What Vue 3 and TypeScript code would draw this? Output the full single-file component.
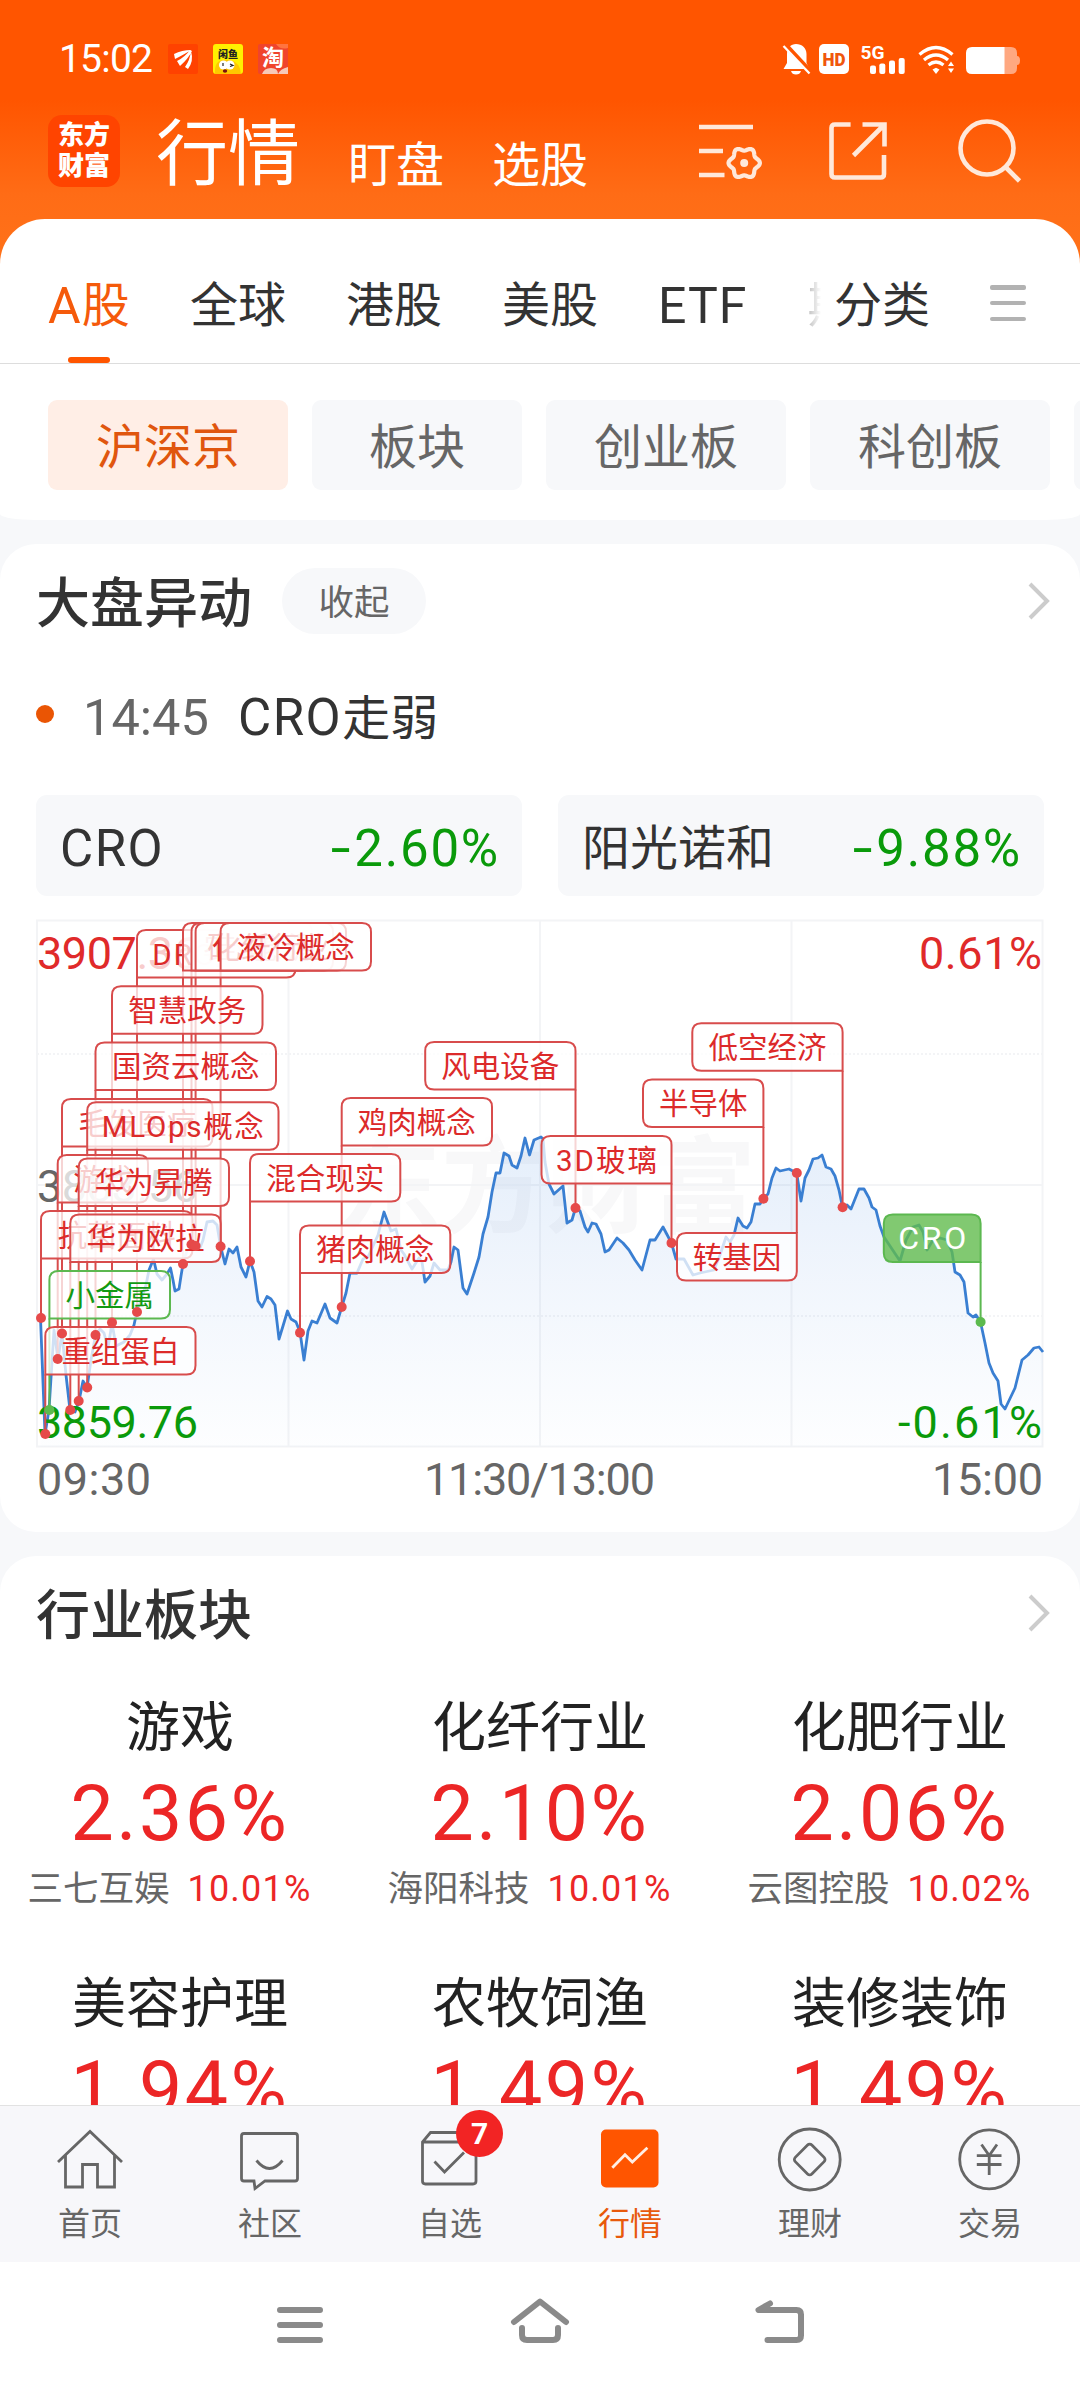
<script setup lang="ts">
interface Flag {
  label: string
  x1: number
  x2: number
  y: number
  side: 'left' | 'right'
  dot: number
  tone: 'red' | 'green' | 'solid'
  below?: boolean
  len?: number
}

const menus: string[] = ['盯盘', '选股']
const tabs: string[] = ['全球', '港股', '美股']
const chips: { label: string; wide: boolean }[] = [
  { label: '沪深京', wide: true },
  { label: '板块', wide: false },
  { label: '创业板', wide: true },
  { label: '科创板', wide: true },
  { label: '', wide: true },
]
const stocks = [
  { name: 'CRO', value: '2.60%' },
  { name: '阳光诺和', value: '9.88%' },
]
const sectors = [
  { name: '游戏', pct: '2.36%', stock: '三七互娱', change: '10.01%' },
  { name: '化纤行业', pct: '2.10%', stock: '海阳科技', change: '10.01%' },
  { name: '化肥行业', pct: '2.06%', stock: '云图控股', change: '10.02%' },
  { name: '美容护理', pct: '1.94%', stock: '', change: '' },
  { name: '农牧饲渔', pct: '1.49%', stock: '', change: '' },
  { name: '装修装饰', pct: '1.49%', stock: '', change: '' },
]

const flags: Flag[] = [
  { label: '抗菌面料', x1: 41, x2: 192.5, y: 1211, side: 'left', dot: 1318, tone: 'red' },
  { label: '重组蛋白', x1: 45.3, x2: 195.5, y: 1327, side: 'left', dot: 1434, tone: 'red' },
  { label: '小金属', x1: 49.4, x2: 170, y: 1271, side: 'left', dot: 1410, tone: 'green' },
  { label: '游戏', x1: 57.7, x2: 148, y: 1155, side: 'left', dot: 1359, tone: 'red' },
  { label: '毛发医疗', x1: 62, x2: 212.5, y: 1099, side: 'left', dot: 1333.5, tone: 'red' },
  { label: '华为欧拉', x1: 70.3, x2: 220.7, y: 1214.5, side: 'left', dot: 1410, tone: 'red' },
  { label: '华为昇腾', x1: 78.7, x2: 229, y: 1158.5, side: 'left', dot: 1401, tone: 'red' },
  { label: 'MLOps概念', x1: 87.2, x2: 278.5, y: 1102.3, side: 'left', dot: 1387.5, tone: 'red', len: 162 },
  { label: '国资云概念', x1: 95.5, x2: 276, y: 1042.5, side: 'left', dot: 1335, tone: 'red' },
  { label: '智慧政务', x1: 112, x2: 262.5, y: 986.3, side: 'left', dot: 1322.5, tone: 'red' },
  { label: 'DRG/DIP', x1: 137, x2: 295.5, y: 930, side: 'left', dot: 1312, tone: 'red', len: 128 },
  { label: '农业股', x1: 183, x2: 312, y: 923, side: 'left', dot: 1264, tone: 'red' },
  { label: '硅能源', x1: 191.5, x2: 333, y: 923, side: 'left', dot: 1244.5, tone: 'red', len: 110 },
  { label: '化纤行业', x1: 195.6, x2: 346, y: 923, side: 'left', dot: 1246, tone: 'red' },
  { label: '液冷概念', x1: 220.6, x2: 371, y: 923, side: 'left', dot: 1246.5, tone: 'red' },
  { label: '混合现实', x1: 250, x2: 400.3, y: 1154, side: 'left', dot: 1261.3, tone: 'red' },
  { label: '猪肉概念', x1: 300, x2: 450.3, y: 1225.5, side: 'left', dot: 1332.7, tone: 'red' },
  { label: '鸡肉概念', x1: 341.7, x2: 492, y: 1098, side: 'left', dot: 1307, tone: 'red' },
  { label: '风电设备', x1: 425.2, x2: 575.5, y: 1042, side: 'right', dot: 1208, tone: 'red' },
  { label: '3D玻璃', x1: 541.5, x2: 671.5, y: 1136, side: 'right', dot: 1243, tone: 'red', len: 101 },
  { label: '转基因', x1: 677, x2: 796.8, y: 1233, side: 'right', dot: 1173, tone: 'red', below: true },
  { label: '半导体', x1: 643, x2: 763.4, y: 1079.5, side: 'right', dot: 1198.7, tone: 'red' },
  { label: '低空经济', x1: 692.3, x2: 842.6, y: 1023.3, side: 'right', dot: 1207.3, tone: 'red' },
  { label: 'CRO', x1: 883.8, x2: 980.6, y: 1214.5, side: 'right', dot: 1322, tone: 'solid', len: 68 },
]
const H = 47.5
const R = 9

const stemX = (f: Flag) => (f.side === 'left' ? f.x1 : f.x2)
const stemY = (f: Flag) => (f.below ? f.y : f.y + H)

// The corner that touches the stem stays square, the other three are rounded.
function box(f: Flag): string {
  const { x1, x2, y } = f
  const b = y + H
  const tr = f.below && f.side === 'right' ? 0 : R
  const br = !f.below && f.side === 'right' ? 0 : R
  const bl = !f.below && f.side === 'left' ? 0 : R
  return `M${x1 + R} ${y}H${x2 - tr}q${tr} 0 ${tr} ${tr}V${b - br}q0 ${br} ${-br} ${br}H${x1 + bl}q${-bl} 0 ${-bl} ${-bl}V${y + R}q0 ${-R} ${R} ${-R}Z`
}

// Six-lobed outline of the settings gear.
const gear = Array.from({ length: 72 }, (_, i) => {
  const a = (i * Math.PI) / 36
  const r = 14 + 1.7 * Math.cos(6 * a)
  return `${(744.2 + r * Math.cos(a)).toFixed(2)},${(163 + r * Math.sin(a)).toFixed(2)}`
}).join(' ')

const points =
  '40.5,1318 45,1434 49,1410 54,1330 58,1359 62,1333 66,1375 70,1410 75,1412 79,1401 83,1381 87,1388 91,1360 95.5,1335 100,1329 104,1333 108,1348 112,1323 116,1346 124,1342 130,1335 134,1325 137,1311 141,1300 146,1285 149,1270 153.5,1259 157,1274 162,1280 167,1274 170.5,1268 173,1280 175,1291 179,1289 181,1276 183,1264 187,1250 191.5,1244 195.5,1246 200,1248 203,1240 207,1222 213,1221 217,1225 220.5,1246 225,1264 229,1249 233,1253 237,1247 241,1267 246,1277 250,1261 254,1272 258,1301 262,1307 267,1296.5 271,1299 275,1305 279,1339 283,1326 287.5,1311 291,1319 296,1322 300,1332 304,1360 308,1331 312,1321 317,1323 325,1304 330,1318 337,1323 341.7,1307 346,1293 350,1273 357,1273 363,1259 368,1257 378,1235 384,1212 391,1231 396,1229 401,1250 404,1254 412,1269 419,1258 422,1262 425,1282 430,1276 434,1263 440,1270 448,1270 451,1262 454,1247 458,1250 463,1288 467,1294 474,1273 479,1257 483,1234 488,1217 492,1192 496,1173 500,1173 504,1153 509,1156 512,1165 517,1168 521,1156 525,1138 529.5,1155 534,1140 541,1137 543,1139 545,1162 549,1184 554,1194 563,1186 567,1223 572,1220 575.5,1208 580,1211 585,1227 588,1232 592,1223 596,1224 601,1234 605,1252 609,1250 617,1238 623,1243 629,1250 635,1260 642,1270 650,1240 655,1240 663,1227 671.5,1243 676,1259 684,1259 693,1275 700,1273 714,1270 720,1255 726,1237 730,1242 734,1235 738,1218 743,1226 747,1228 751,1222 755,1204 760,1204 763,1199 768,1194 772,1178 776,1168 780,1171 789,1169 796.7,1173 801,1201 805,1178 809,1170 813,1159 818,1158 822,1155 826,1167 831,1169 835,1176 839,1190 842.5,1207 847,1205 851,1209 859,1189 864,1189 869,1198 872,1207 876,1210 880,1226 884,1237 890,1246 900,1261 906,1240 913,1227 919,1225 923,1232 927,1250 933,1240 940,1238 947,1240 952,1252 955,1272 960,1275 964,1282 968,1313 973,1317 976,1315 980.5,1322 985,1343 989,1363 993,1373 998,1381 1001,1404 1005,1409 1015,1388 1022,1360 1028,1355 1034,1348 1039,1347 1043,1352'
</script>

<template>
  <div class="screen">
    <header class="top">
      <div class="status">
        <span class="clock">15:02</span>
        <svg class="apps" width="120" height="30" viewBox="168 44 120 30">
          <rect x="168" y="44" width="30" height="30" rx="2" fill="#ff4200" />
          <path d="M174 54q8-4 17-4q-6 4-16 9zM177 61q8-4 13-11l2 1q-4 8-12 15zM185 67q5-7 6-16q3 10-3 18z" fill="#fff" />
          <rect x="213" y="44" width="30" height="30" rx="3" fill="#fff200" />
          <text x="228" y="57.500" class="mini-a">闲鱼</text>
          <path d="M215 74q-1-14 9-14h6q10 2 11 14z" fill="#ffc800" />
          <circle cx="223.500" cy="65" r="4.500" fill="#fff" />
          <circle cx="230" cy="65" r="4.500" fill="#fff" />
          <path d="M223 63v3M230 64l3 1.500-3 1" stroke="#222" stroke-width="1.200" fill="none" />
          <ellipse cx="225" cy="71" rx="2.200" ry="1.700" fill="#7a1010" />
          <rect x="258" y="44" width="30" height="30" rx="2" fill="#f0442c" />
          <path d="M276 44h12v4q-8 2-12-4z" fill="#ff7440" />
          <path d="M262 74q2-6 9-6t7 6zM278 74q2-5 10-7v7z" fill="#f7c9b8" />
          <text x="273" y="64.500" class="mini-b">淘</text>
        </svg>
        <svg class="signals" width="240" height="32" viewBox="780 44 240 32">
          <path d="M796 44c6 0 10.500 4 10.500 10v9l3 6h-26l3.500-6v-9c0-6 4-10 9-10zM791 71h10q-1 3.500-5 3.500t-5-3.500z" fill="#fff" />
          <path d="M785 44.500l26 28" stroke="#ff5500" stroke-width="5" />
          <path d="M783.500 46l26 27.500" stroke="#fff" stroke-width="2.300" />
          <rect x="819" y="44" width="30" height="30" rx="5" fill="#fff" />
          <text x="834" y="65.600" class="hd" textLength="23" lengthAdjust="spacingAndGlyphs">HD</text>
          <text x="860.500" y="58.500" class="fiveg" textLength="24" lengthAdjust="spacingAndGlyphs">5G</text>
          <g fill="#fff">
            <rect x="870" y="65.500" width="6" height="8.500" rx="2" />
            <rect x="879.300" y="63.500" width="6" height="10.500" rx="2" />
            <rect x="889" y="60.500" width="6" height="13.500" rx="2" />
            <rect x="898.700" y="58" width="6" height="16" rx="2" />
            <path d="M932.500 69.500l3.500-1.800 3.500 1.800-3.500 4.500z" />
            <path d="M948 66l3-4.500 3 4.500zM948 68.500h6l-3 4.500z" />
          </g>
          <g fill="none" stroke="#fff" stroke-width="3.300">
            <path d="M919.500 54.500q16.500-14 33 0" />
            <path d="M924 60q12-10 24 0" />
            <path d="M928.500 65q7.500-6 15 0" />
          </g>
          <path d="M1004 47h7q6 0 6 6v3q3 0 3 4.500t-3 4.500v3q0 6-6 6h-7z" fill="#ffa880" />
          <path d="M972 47h32.500v27H972q-6 0-6-6V53q0-6 6-6z" fill="#fff" />
        </svg>
      </div>
      <div class="bar">
        <div class="logo"><span>东方</span><span>财富</span></div>
        <h1>行情</h1>
        <span v-for="m in menus" :key="m" class="menu">{{ m }}</span>
        <svg class="tools" width="330" height="64" viewBox="695 119 330 64" fill="none" stroke="#ffe8da" stroke-width="4.600">
          <path d="M699 127h54M699 151h24M699 175h25.500" />
          <polygon :points="gear" stroke-width="4.200" stroke-linejoin="round" />
          <circle cx="744.200" cy="163" r="4" fill="#ffe8da" stroke="none" />
          <path d="M850.600 124.500H835q-3.500 0-3.500 3.500v46q0 3.500 3.500 3.500h45.500q3.500 0 3.500-3.500v-19M862.500 124.500H884.500V146.500M853.500 155.500L884 125" />
          <circle cx="987" cy="148" r="26.500" />
          <path d="M1005.500 167l14 14" />
        </svg>
      </div>
    </header>

    <section class="panel">
      <nav class="tabs">
        <div class="scroll">
          <span class="tab on"><i class="lat">A</i>股</span>
          <span v-for="t in tabs" :key="t" class="tab">{{ t }}</span>
          <span class="tab"><i class="lat etf">ETF</i></span>
          <span class="tab fade">期货</span>
        </div>
        <span class="tab sort">分类</span>
        <div class="burger"><b></b><b></b><b></b></div>
      </nav>
      <div class="chips">
        <span v-for="(c, i) in chips" :key="i" class="chip" :class="{ wide: c.wide, on: i === 0 }">{{ c.label }}</span>
      </div>
    </section>

    <main class="content">
      <section class="card first">
        <div class="head">
          <h2>大盘异动</h2>
          <span class="pill">收起</span>
          <svg class="chev" width="24" height="40" viewBox="0 0 24 40"><path d="M2 3l17 17L2 37" /></svg>
        </div>
        <div class="event">
          <b class="bullet"></b>
          <span class="time">14:45</span>
          <span class="what"><i class="lat">CRO</i>走弱</span>
        </div>
        <div class="stocks">
          <div v-for="s in stocks" :key="s.name" class="stock">
            <span :class="{ lat: s.name === 'CRO' }">{{ s.name }}</span>
            <span class="down"><i class="minus">-</i>{{ s.value }}</span>
          </div>
        </div>
        <svg class="chart" width="1080" height="618" viewBox="0 914 1080 618">
          <defs>
            <linearGradient id="fill" gradientUnits="userSpaceOnUse" x1="0" y1="1130" x2="0" y2="1447">
              <stop offset="0" stop-color="#3d87e0" stop-opacity=".14" />
              <stop offset=".5" stop-color="#3d80e0" stop-opacity=".07" />
              <stop offset="1" stop-color="#3d87e0" stop-opacity=".01" />
            </linearGradient>
          </defs>
          <text x="336" y="1224" class="mark" textLength="420">东方财富</text>
          <g fill="none" stroke="#f3f4f6" stroke-width="2">
            <rect x="37" y="920.500" width="1005.500" height="526" />
            <path d="M288.500 921V1447M540 921V1447M791.500 921V1447M37 1185H1042" />
            <path d="M37 1054H1042M37 1316H1042" stroke-dasharray="2 2" />
          </g>
          <polygon :points="`${points} 1043,1447 40.5,1447`" fill="url(#fill)" />
          <polyline :points="points" fill="none" stroke="#3a7fd2" stroke-width="2.800" stroke-linejoin="round" />
          <g class="axis">
            <text x="37" y="969" fill="#e02a2a" textLength="161">3907.36</text>
            <text x="37" y="1202" fill="#666" textLength="161">3883.56</text>
            <text x="37" y="1438" fill="#0a9a0a" textLength="161">3859.76</text>
            <text x="919" y="969" fill="#e02a2a" textLength="123">0.61%</text>
            <text x="898" y="1438" fill="#0a9a0a" textLength="144">-0.61%</text>
            <text x="37" y="1495" fill="#666" textLength="114">09:30</text>
            <text x="424" y="1495" fill="#666" textLength="231">11:30/13:00</text>
            <text x="932" y="1495" fill="#666" textLength="111">15:00</text>
          </g>
          <path
            v-for="f in flags"
            :key="'s' + f.label"
            class="stem"
            :class="f.tone"
            :d="`M${stemX(f)} ${stemY(f)}V${f.dot}`"
          />
          <g v-for="f in flags" :key="'b' + f.label" class="flag" :class="f.tone">
            <path :d="box(f)" />
            <text :x="(f.x1 + f.x2) / 2" :y="f.y + 34.5" :textLength="f.len">{{ f.label }}</text>
          </g>
          <circle v-for="f in flags" :key="'d' + f.label" class="dot" :class="f.tone" :cx="stemX(f)" :cy="f.dot" r="5" />
        </svg>
      </section>

      <section class="card second">
        <div class="head">
          <h2>行业板块</h2>
          <svg class="chev" width="24" height="40" viewBox="0 0 24 40"><path d="M2 3l17 17L2 37" /></svg>
        </div>
        <div class="grid">
          <div v-for="s in sectors" :key="s.name" class="sector">
            <div class="name">{{ s.name }}</div>
            <div class="pct">{{ s.pct }}</div>
            <div class="sub"><span>{{ s.stock }}</span><em>{{ s.change }}</em></div>
          </div>
        </div>
      </section>
    </main>

    <nav class="dock">
      <div class="item">
        <svg viewBox="0 0 72 72"><path d="M4 38L36 7.500 68 38M11.500 31V63H28.500V40.500H43.500V63H60.500V31" /></svg>
        <span>首页</span>
      </div>
      <div class="item">
        <svg viewBox="0 0 72 72">
          <path d="M10 9.500H61q2.500 0 2.500 2.500V54.500q0 2.500-2.500 2.500H31L21 64.500 20 57H10q-2.500 0-2.500-2.500V12q0-2.500 2.500-2.500zM22.500 36.500q13 16 26 0" />
        </svg>
        <span>社区</span>
      </div>
      <div class="item">
        <svg viewBox="0 0 72 72">
          <path d="M8.500 18H62V57q0 3-3 3H11.500q-3 0-3-3V18L16.500 8.500H54L62 18M20.500 37.500L30.500 48 50 28.500" />
        </svg>
        <span>自选</span>
        <b class="badge">7</b>
      </div>
      <div class="item on">
        <svg viewBox="0 0 72 72">
          <rect x="7" y="5.500" width="57.500" height="58" rx="5" fill="#ff5500" stroke="none" />
          <path d="M18.300 43.700L31 30.700 38.300 38 53.400 23.700" stroke="#ffeee4" />
        </svg>
        <span>行情</span>
      </div>
      <div class="item">
        <svg viewBox="0 0 72 72">
          <circle cx="35.700" cy="35.500" r="30.500" />
          <rect x="24" y="23.800" width="23.400" height="23.400" rx="3" transform="rotate(45 35.700 35.500)" />
        </svg>
        <span>理财</span>
      </div>
      <div class="item">
        <svg viewBox="0 0 72 72">
          <circle cx="35.200" cy="35.300" r="29.500" />
          <path d="M27.500 20.500L35.200 31.500 43 20.500M22.800 31.700H47.500M22.800 40.500H47.500M35.200 31.500V51" />
        </svg>
        <span>交易</span>
      </div>
    </nav>

    <footer class="system">
      <svg width="540" height="60" viewBox="270 2295 540 60" fill="none" stroke="#8a8a8a" stroke-width="6" stroke-linecap="round" stroke-linejoin="round">
        <path d="M280 2310h40M280 2325h40M280 2340h40" />
        <path d="M514 2322L540 2301.500 566 2322M522 2328v7q0 5 5 5h26q5 0 5-5v-7" />
        <path d="M770 2303.500L758.500 2310H796.500q4.500 0 4.500 4.500V2335.500q0 4.500-4.500 4.500H767.500" />
      </svg>
    </footer>
  </div>
</template>

<style>
body {
  margin: 0;
  background: #fff;
}
</style>

<style scoped>
.screen {
  width: 1080px;
  height: 2388px;
  display: flex;
  flex-direction: column;
  overflow: hidden;
  background: #fff;
  color: #333;
  font-family: Roboto, 'Noto Sans CJK SC', sans-serif;
  font-size: 48px;
}
i,
em {
  font-style: normal;
}
h1,
h2 {
  margin: 0;
}
.top {
  height: 268px;
  margin-bottom: -49px;
  flex: none;
  background: linear-gradient(#ff5500 0, #ff5500 100px, #ff6c16 195px, #ff7018 240px);
}
.status {
  height: 30px;
  padding: 44px 60px 0 59px;
  display: flex;
  align-items: center;
  color: #fff;
}
.clock {
  width: 109px;
  font-size: 39px;
  letter-spacing: -0.8px;
  line-height: 30px;
}
.signals {
  margin-left: auto;
  position: relative;
  top: 1px;
}
.mini-a {
  font: 900 10px 'Noto Sans CJK SC', sans-serif;
  text-anchor: middle;
  fill: #222;
}
.mini-b {
  font: 700 22px 'Noto Sans CJK SC', sans-serif;
  text-anchor: middle;
  fill: #fff;
}
.hd {
  font: 900 19px Roboto, sans-serif;
  text-anchor: middle;
  fill: #f0560c;
}
.fiveg {
  font: 700 19px Roboto, sans-serif;
  fill: #fff;
}
.bar {
  height: 72px;
  padding: 41px 55px 0 48px;
  display: flex;
  color: #fff;
}
.logo {
  width: 72px;
  height: 72px;
  border-radius: 14px;
  background: #ff4400;
  display: flex;
  flex-direction: column;
  align-items: center;
  justify-content: center;
  font: 900 26px/31px Roboto, 'Noto Sans CJK SC', sans-serif;
}
.bar h1 {
  margin-left: 36px;
  width: 144px;
  font-size: 72px;
  font-weight: 400;
  line-height: 80px;
}
.menu {
  margin-left: 48px;
  line-height: 102px;
}
.tools {
  margin: 4px 0 0 auto;
}
.panel {
  height: 295px;
  flex: none;
  border-radius: 45px 45px 0 0;
  background: #fff;
}
.tabs {
  height: 144px;
  border-bottom: 1px solid #ddd;
  display: flex;
}
.scroll {
  width: 774px;
  padding-left: 48px;
  display: flex;
  gap: 60px;
  overflow: hidden;
}
.tab {
  flex: none;
  line-height: 174px;
  height: 144px;
}
.lat {
  font-size: 51px;
  letter-spacing: 1.5px;
}
.tab .lat {
  font-size: 50px;
  letter-spacing: 1px;
}
.tab.on {
  display: flex;
  width: 82px;
  color: #f55a0b;
  position: relative;
}
.tab.on::after {
  content: '';
  position: absolute;
  left: 20px;
  bottom: 0;
  width: 42px;
  height: 6px;
  border-radius: 3px;
  background: #ff5500;
}
.tab.fade {
  color: transparent;
  background: linear-gradient(90deg, #bbb, #fff 14px);
  background-clip: text;
  -webkit-background-clip: text;
}
.sort {
  margin-left: 12px;
}
.burger {
  margin: 66px 0 0 60px;
  width: 36px;
  height: 36px;
  display: flex;
  flex-direction: column;
  justify-content: space-between;
}
.burger b {
  height: 4.5px;
  border-radius: 2px;
  background: #b2b2b2;
}
.chips {
  display: flex;
  gap: 24px;
  padding: 36px 0 0 48px;
  overflow: hidden;
}
.chip {
  flex: none;
  width: 210px;
  height: 90px;
  border-radius: 9px;
  background: #f7f8fa;
  color: #666;
  line-height: 96px;
  text-align: center;
}
.chip.wide {
  width: 240px;
}
.chip.on {
  background: #ffeee6;
  color: #e0560e;
}
.content {
  flex: 1;
  min-height: 0;
  overflow: hidden;
  background: #f7f8fa;
}
.content::before {
  content: '';
  display: block;
  height: 6px;
  margin-bottom: 24px;
  border-radius: 0 0 36px 36px / 0 0 6px 6px;
  background: #fff;
}
.card {
  background: #fff;
  border-radius: 36px;
  overflow: hidden;
}
.first {
  height: 988px;
  margin-bottom: 24px;
}
.second {
  height: 900px;
}
.head {
  height: 66px;
  padding: 24px 28px 0 36px;
  display: flex;
  align-items: center;
}
.head h2 {
  margin-top: 7px;
  font-size: 54px;
  font-weight: 500;
  line-height: 74px;
}
.pill {
  margin-left: 30px;
  width: 144px;
  height: 66px;
  border-radius: 33px;
  background: #f7f8fa;
  color: #666;
  font-size: 35.5px;
  line-height: 71px;
  text-align: center;
}
.chev {
  margin-left: auto;
}
.chev path {
  fill: none;
  stroke: #ccc;
  stroke-width: 4;
}
.event {
  height: 80px;
  margin-top: 40px;
  padding-left: 36px;
  display: flex;
  align-items: center;
  line-height: 80px;
}
.bullet {
  width: 18px;
  height: 18px;
  border-radius: 50%;
  background: #ea5504;
}
.time {
  margin: 8px 0 0 29px;
  width: 155px;
  font-size: 50.5px;
  color: #666;
}
.what {
  margin-top: 8px;
}
.stocks {
  margin-top: 41px;
  padding: 0 36px;
  display: flex;
  gap: 36px;
}
.stock {
  flex: 1;
  height: 101px;
  padding: 0 22px 0 24px;
  border-radius: 11px;
  background: #f7f8fa;
  display: flex;
  justify-content: space-between;
  line-height: 108px;
}
.down {
  font-size: 51px;
  color: #0a9a0a;
  letter-spacing: 1.8px;
}
.minus {
  display: inline-block;
  margin-right: 4px;
  transform: scaleX(1.4);
}
.chart {
  display: block;
  margin-top: 18px;
}
.mark {
  font: 700 105px 'Noto Sans CJK SC', sans-serif;
  fill: #f8f8f9;
}
.axis {
  font-size: 45px;
}
.stem {
  fill: none;
  stroke: #d84c4c;
  stroke-width: 2;
}
.stem.green,
.stem.solid {
  stroke: #5cb850;
}
.flag path {
  fill: rgba(255, 255, 255, 0.76);
  stroke: #d84c4c;
  stroke-width: 2;
}
.flag text {
  font-size: 29.5px;
  text-anchor: middle;
  fill: #dc2a2a;
}
.flag.green path {
  stroke: #5cb850;
}
.flag.green text {
  fill: #129a12;
}
.flag.solid path {
  fill: rgba(97, 188, 78, 0.8);
  stroke: #5cb850;
}
.flag.solid text {
  font-size: 32px;
  fill: #fff;
}
.dot {
  fill: #e64a4a;
}
.dot.green,
.dot.solid {
  fill: #5cba4e;
}
.grid {
  display: grid;
  grid-template-columns: repeat(3, 360px);
  margin-top: 41px;
}
.sector {
  height: 276px;
  text-align: center;
  white-space: nowrap;
}
.name {
  font-size: 54px;
  line-height: 84px;
  color: #222;
}
.pct {
  font-size: 77px;
  line-height: 86px;
  letter-spacing: 2.5px;
  color: #ec2626;
}
.sub {
  height: 64px;
  padding-right: 21px;
  display: flex;
  justify-content: center;
  gap: 18px;
  font-size: 35.5px;
  line-height: 64px;
  color: #666;
}
.sub em {
  font-size: 36px;
  color: #ec2626;
  letter-spacing: 1.2px;
}
.dock {
  height: 156px;
  flex: none;
  border-top: 1px solid #e2e2e2;
  background: #f7f7fa;
  display: flex;
}
.item {
  position: relative;
  width: 180px;
  display: flex;
  flex-direction: column;
  align-items: center;
  font-size: 32px;
  color: #666;
}
.item.on {
  color: #e8590c;
}
.item svg {
  width: 72px;
  height: 72px;
  margin-top: 18px;
  fill: none;
  stroke: #666;
  stroke-width: 2.8;
}
.item span {
  margin-top: 7px;
  line-height: 42px;
}
.badge {
  position: absolute;
  left: 96px;
  top: 4px;
  width: 47px;
  height: 47px;
  border-radius: 50%;
  background: #f22424;
  color: #fff;
  font: 700 30px/48px Roboto, sans-serif;
  text-align: center;
}
.system {
  height: 126px;
  flex: none;
  display: flex;
  justify-content: center;
  align-items: center;
  background: #fff;
}
</style>
